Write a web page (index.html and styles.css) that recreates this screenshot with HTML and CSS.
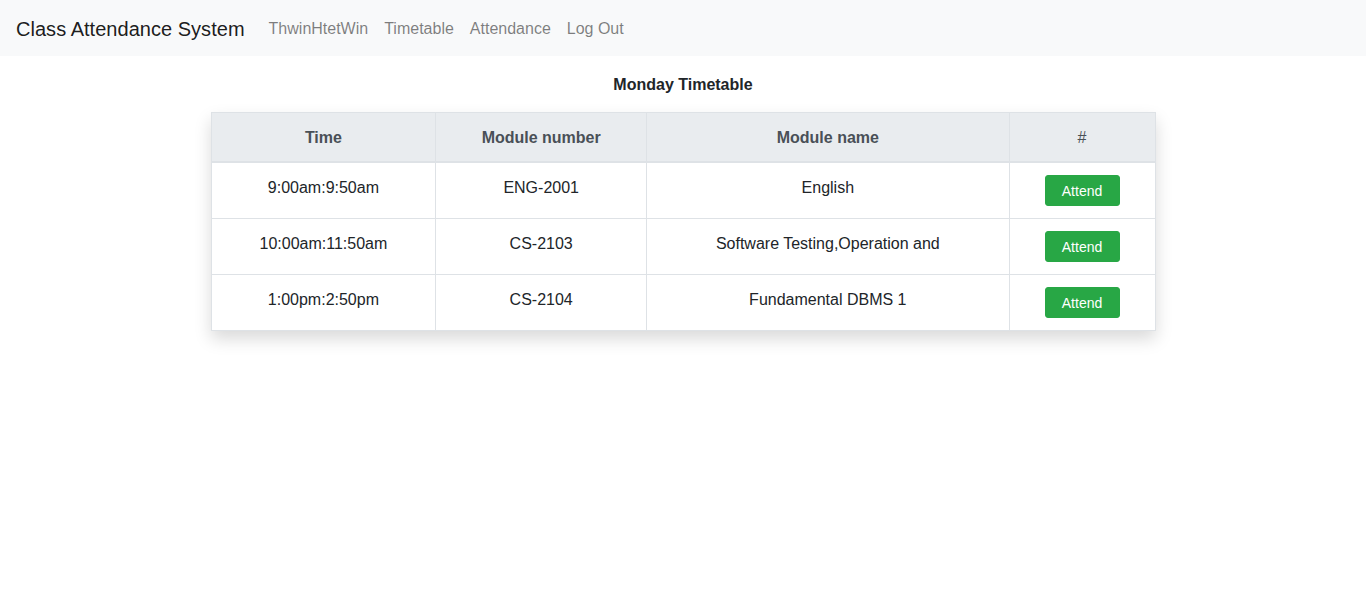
FILE: index.html
```html
<!DOCTYPE html>
<html lang="en">
<head>
<meta charset="utf-8">
<title>Class Attendance System</title>
<link rel="stylesheet" href="styles.css">
</head>
<body>
<nav class="navbar">
  <a class="brand" href="#">Class Attendance System</a>
  <ul class="nav">
    <li><a href="#">ThwinHtetWin</a></li>
    <li><a href="#">Timetable</a></li>
    <li><a href="#">Attendance</a></li>
    <li><a href="#">Log Out</a></li>
  </ul>
</nav>
<main class="content">
  <h1 class="title">Monday Timetable</h1>
  <div class="table-wrap">
    <table class="timetable">
      <thead>
        <tr>
          <th class="c-time">Time</th>
          <th class="c-num">Module number</th>
          <th class="c-name">Module name</th>
          <th class="c-act hash">#</th>
        </tr>
      </thead>
      <tbody>
        <tr>
          <td>9:00am:9:50am</td>
          <td>ENG-2001</td>
          <td>English</td>
          <td class="act"><button class="btn">Attend</button></td>
        </tr>
        <tr>
          <td>10:00am:11:50am</td>
          <td>CS-2103</td>
          <td>Software Testing,Operation and</td>
          <td class="act"><button class="btn">Attend</button></td>
        </tr>
        <tr>
          <td>1:00pm:2:50pm</td>
          <td>CS-2104</td>
          <td>Fundamental DBMS 1</td>
          <td class="act"><button class="btn">Attend</button></td>
        </tr>
      </tbody>
    </table>
  </div>
</main>
</body>
</html>
```

FILE: styles.css
```css
* { box-sizing: border-box; }
html, body {
  margin: 0;
  padding: 0;
  background: #fff;
  font-family: "Liberation Sans", Arial, sans-serif;
  font-size: 16px;
  line-height: 1.5;
  color: #212529;
}
body { min-height: 100vh; }
.navbar {
  display: flex;
  align-items: center;
  height: 56px;
  padding: 9px 16px 7px;
  background: #f8f9fa;
}
.brand {
  font-size: 20px;
  line-height: 30px;
  letter-spacing: 0.03px;
  color: rgba(0,0,0,.9);
  text-decoration: none;
  margin-right: 16px;
  padding: 5px 0;
}
.nav {
  display: flex;
  list-style: none;
  margin: 0;
  padding: 0;
}
.nav a {
  display: block;
  padding: 8px 8px;
  color: rgba(0,0,0,.5);
  text-decoration: none;
}
.content {
  display: flex;
  flex-direction: column;
  align-items: center;
  padding-bottom: 40px;
}
.title {
  margin: 17px 0 15px;
  font-size: 16px;
  line-height: 24px;
  font-weight: 700;
}
.table-wrap {
  width: 945px;
  background: #fff;
  box-shadow: 0 8px 16px rgba(0,0,0,.15);
}
.timetable {
  width: 100%;
  border-collapse: collapse;
  text-align: center;
}
.timetable th, .timetable td {
  border: 1px solid #dee2e6;
  padding: 13px 12px 11px;
  vertical-align: top;
}
.timetable td.act { padding: 12px; }
.timetable thead th {
  background: #e9ecef;
  color: #495057;
  font-weight: 700;
  border-bottom: 2px solid #dee2e6;
}
.timetable thead th.hash { font-weight: 400; }
.c-time { width: 225px; }
.c-num { width: 211px; }
.c-name { width: 363px; }
.c-act { width: 146px; }
.btn {
  display: inline-block;
  vertical-align: top;
  width: 75px;
  font-family: inherit;
  font-size: 14px;
  line-height: 21px;
  padding: 5px 0 3px;
  color: #fff;
  background: #28a745;
  border: 1px solid #28a745;
  border-radius: 3px;
  cursor: pointer;
}
```
